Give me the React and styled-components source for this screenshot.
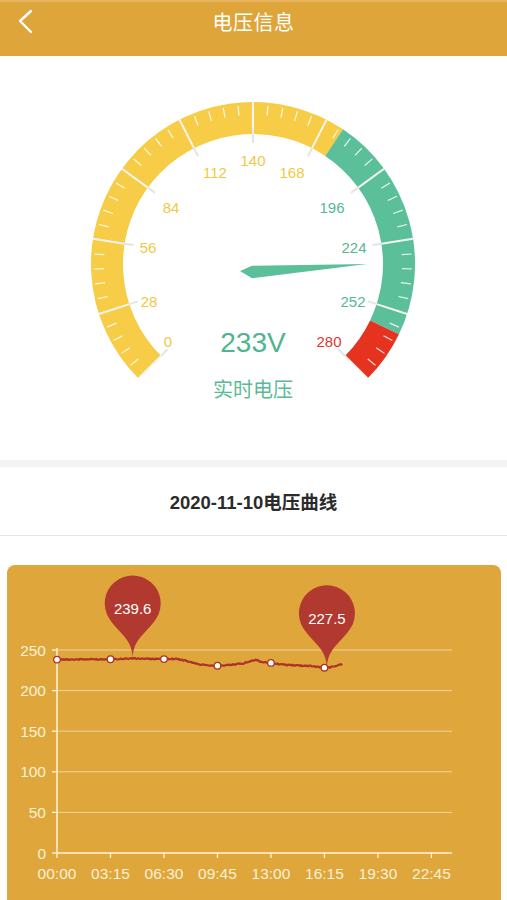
import React from "react";
import styled, { createGlobalStyle } from "styled-components";

// Gauge geometry (coordinates inside the gauge panel)
const CX = 253;
const CY = 208;
const R = 162;
const BAND = 32;
const MAX = 280;

const YELLOW = "#F7CC47";
const GREEN = "#5BBF9A";
const RED = "#E5331F";

const angle = (v) => ((225 - (v / MAX) * 270) * Math.PI) / 180;
const pt = (v, r) => [CX + r * Math.cos(angle(v)), CY - r * Math.sin(angle(v))];

const arcPath = (a, b, r) => {
  const [x1, y1] = pt(a, r);
  const [x2, y2] = pt(b, r);
  const large = ((b - a) / MAX) * 270 > 180 ? 1 : 0;
  return `M${x1} ${y1} A${r} ${r} 0 ${large} 1 ${x2} ${y2}`;
};

const bands = [
  { from: 0, to: 175, color: YELLOW },
  { from: 175, to: 260, color: GREEN },
  { from: 260, to: 280, color: RED },
];

const labels = [
  { v: 0, x: 168, y: 285, color: "#F3C744" },
  { v: 28, x: 149, y: 245, color: "#F3C744" },
  { v: 56, x: 148, y: 191, color: "#F3C744" },
  { v: 84, x: 171, y: 151, color: "#F3C744" },
  { v: 112, x: 215, y: 116, color: "#F3C744" },
  { v: 140, x: 253, y: 104, color: "#F3C744" },
  { v: 168, x: 292, y: 116, color: "#F3C744" },
  { v: 196, x: 332, y: 151, color: "#55B993" },
  { v: 224, x: 354, y: 191, color: "#55B993" },
  { v: 252, x: 353, y: 245, color: "#55B993" },
  { v: 280, x: 329, y: 285, color: "#E0392B" },
];

// Chart geometry (coordinates inside the card)
const X0 = 50;
const X1 = 445;
const Y0 = 288;
const YTOP = 85;
const xh = (h) => X0 + (h / 24) * (X1 - X0);
const yv = (v) => Y0 - (v / 250) * (Y0 - YTOP);

const keyframes = [
  [0, 238.2], [1.5, 238.5], [3.25, 238.6], [4.6, 239.6], [5.5, 239.1],
  [6.5, 238.8], [7.2, 239.2], [7.8, 237], [8.4, 233.2], [9, 231.6],
  [9.75, 230.6], [10.5, 231.4], [11.3, 233.4], [11.8, 236.8], [12.1, 238],
  [12.4, 235.2], [13, 234.1], [13.6, 232.2], [14.5, 231.2], [15.5, 230.2],
  [16.4, 227.8], [16.8, 229.6], [17.38, 233],
];

const interp = (h) => {
  for (let i = 0; i < keyframes.length - 1; i++) {
    const [h1, v1] = keyframes[i];
    const [h2, v2] = keyframes[i + 1];
    if (h >= h1 && h <= h2) return v1 + ((h - h1) / (h2 - h1)) * (v2 - v1);
  }
  return keyframes[keyframes.length - 1][1];
};

const rand = (i) => {
  const s = Math.sin(i * 78.233 + 12.9898) * 43758.5453;
  return s - Math.floor(s);
};

const series = [];
for (let i = 0; i * 4 <= 17.38 * 60; i++) {
  const h = (i * 4) / 60;
  series.push([h, interp(h) + (rand(i) - 0.5) * 1.3]);
}
const linePath = series
  .map(([h, v], i) => `${i ? "L" : "M"}${xh(h).toFixed(1)} ${yv(v).toFixed(1)}`)
  .join(" ");

const dotHours = [0, 3.25, 6.5, 9.75, 13, 16.25];
const xLabels = ["00:00", "03:15", "06:30", "09:45", "13:00", "16:15", "19:30", "22:45"];
const yLevels = [0, 50, 100, 150, 200, 250];

// echarts-like map pin, tip at (x, y)
const pinPath = (x, y) => {
  const r = 28;
  const cy = y - 55;
  const a = (32 * Math.PI) / 180;
  const lx = x - r * Math.cos(a);
  const rx = x + r * Math.cos(a);
  const py = cy + r * Math.sin(a);
  const cp = r * 0.6;
  const cp2 = r * 0.7;
  return `M${lx} ${py} A${r} ${r} 0 1 1 ${rx} ${py} C${rx - Math.sin(a) * cp} ${py + Math.cos(a) * cp} ${x} ${y - cp2} ${x} ${y} C${x} ${y - cp2} ${lx + Math.sin(a) * cp} ${py + Math.cos(a) * cp} ${lx} ${py} Z`;
};

const pins = [
  { h: 4.6, v: 239.6, text: "239.6" },
  { h: 16.4, v: 227.5, text: "227.5" },
];

const Gauge = () => (
  <GaugeSvg width="507" height="404" viewBox="0 0 507 404">
    {bands.map((b) => (
      <path
        key={b.from}
        d={arcPath(b.from, b.to, R - BAND / 2)}
        stroke={b.color}
        strokeWidth={BAND}
        fill="none"
      />
    ))}
    {Array.from({ length: 51 }, (_, i) => i)
      .filter((i) => i % 5 !== 0)
      .map((i) => {
        const v = i * 5.6;
        const [x1, y1] = pt(v, R - 3);
        const [x2, y2] = pt(v, R - 13);
        return (
          <line key={i} x1={x1} y1={y1} x2={x2} y2={y2} stroke="#fff" strokeOpacity="0.85" strokeWidth="1.2" />
        );
      })}
    {Array.from({ length: 11 }, (_, i) => i * 28).map((v) => {
      const [x1, y1] = pt(v, R);
      const [x2, y2] = pt(v, R - BAND);
      const [x3, y3] = pt(v, R - BAND - 9);
      return (
        <g key={v}>
          <line x1={x1} y1={y1} x2={x2} y2={y2} stroke="#f4f4f4" strokeWidth="2" />
          <line x1={x2} y1={y2} x2={x3} y2={y3} stroke="#e4e4e4" strokeWidth="2" />
        </g>
      );
    })}
    {labels.map((l) => (
      <GaugeLabel key={l.v} x={l.x} y={l.y} fill={l.color}>
        {l.v}
      </GaugeLabel>
    ))}
    <polygon points="240,215 252,209.7 367,208 252,222.3" fill={GREEN} />
    <ValueText x={253} y={286}>233V</ValueText>
    <CaptionText x={253} y={332}>实时电压</CaptionText>
  </GaugeSvg>
);

const Chart = () => (
  <ChartSvg width="494" height="345" viewBox="0 0 494 345">
    {yLevels.map((lv) => (
      <g key={lv}>
        {lv > 0 && (
          <line x1={X0} y1={yv(lv)} x2={X1} y2={yv(lv)} stroke="#fff" strokeOpacity="0.5" strokeWidth="1" />
        )}
        <line x1={X0 - 5} y1={yv(lv)} x2={X0} y2={yv(lv)} stroke="#FFF3D8" strokeWidth="1.3" />
        <AxisText x={39} y={yv(lv)} textAnchor="end">
          {lv}
        </AxisText>
      </g>
    ))}
    <line x1={X0} y1={YTOP - 2} x2={X0} y2={Y0} stroke="#FFF3D8" strokeWidth="1.5" />
    <line x1={X0} y1={Y0} x2={X1} y2={Y0} stroke="#FFF3D8" strokeWidth="1.5" />
    {xLabels.map((t, i) => {
      const x = xh(i * 3.25);
      return (
        <g key={t}>
          <line x1={x} y1={Y0} x2={x} y2={Y0 + 5} stroke="#FFF3D8" strokeWidth="1.3" />
          <AxisText x={x} y={308} textAnchor="middle">
            {t}
          </AxisText>
        </g>
      );
    })}
    <path d={linePath} stroke="#AE3328" strokeWidth="2.2" fill="none" strokeLinejoin="round" />
    {dotHours.map((h) => (
      <circle key={h} cx={xh(h)} cy={yv(interp(h))} r="3.3" fill="#fff" stroke="#AE3328" strokeWidth="1.3" />
    ))}
    {pins.map((p) => {
      const x = xh(p.h);
      const y = yv(p.v);
      return (
        <g key={p.text}>
          <path d={pinPath(x, y)} fill="#B2392F" />
          <PinText x={x} y={y - 50}>
            {p.text}
          </PinText>
        </g>
      );
    })}
  </ChartSvg>
);

const App = () => (
  <Page>
    <GlobalStyle />
    <Header>
      <BackIcon width="16" height="26" viewBox="0 0 16 26">
        <polyline points="13,3 2,13 13,24" fill="none" stroke="#fff" strokeWidth="2.4" strokeLinecap="round" strokeLinejoin="round" />
      </BackIcon>
      <Title>电压信息</Title>
    </Header>
    <GaugePanel>
      <Gauge />
    </GaugePanel>
    <Divider />
    <SectionTitle>2020-11-10电压曲线</SectionTitle>
    <ChartCard>
      <Chart />
    </ChartCard>
  </Page>
);

export default App;

const GlobalStyle = createGlobalStyle`
  html, body {
    margin: 0;
    padding: 0;
    background: #fff;
  }
  body {
    font-family: "Liberation Sans", "Noto Sans CJK SC", sans-serif;
  }
`;

const Page = styled.div`
  width: 507px;
  background: #fff;
  overflow: hidden;
`;

const Header = styled.div`
  position: relative;
  height: 48px;
  background: #DEA53A;
  border-top: 2px solid #E6B25E;
  display: flex;
  justify-content: center;
  padding-top: 6px;
`;

const BackIcon = styled.svg`
  position: absolute;
  left: 18px;
  top: 6px;
`;

const Title = styled.div`
  color: #fff;
  font-size: 20px;
  line-height: 28px;
  letter-spacing: 0.5px;
  font-family: "Noto Sans CJK SC", sans-serif;
`;

const GaugePanel = styled.div`
  height: 404px;
  background: #fff;
`;

const GaugeSvg = styled.svg`
  display: block;
`;

const GaugeLabel = styled.text`
  font-family: "Liberation Sans", sans-serif;
  font-size: 15px;
  text-anchor: middle;
  dominant-baseline: central;
`;

const ValueText = styled.text`
  font-family: "Liberation Sans", sans-serif;
  font-size: 28px;
  fill: #4DB68D;
  text-anchor: middle;
  dominant-baseline: central;
`;

const CaptionText = styled.text`
  font-family: "Noto Sans CJK SC", sans-serif;
  font-size: 20px;
  fill: #5BBA96;
  text-anchor: middle;
  dominant-baseline: central;
`;

const Divider = styled.div`
  height: 7px;
  background: #F3F3F5;
`;

const SectionTitle = styled.div`
  height: 68px;
  display: flex;
  align-items: center;
  justify-content: center;
  border-bottom: 1px solid #E6E6E6;
  font-size: 18.5px;
  font-weight: bold;
  color: #2b2b2b;
  font-family: "Liberation Sans", "Noto Sans CJK SC", sans-serif;
  margin-bottom: 29px;
`;

const ChartCard = styled.div`
  margin: 0 6px 20px 7px;
  height: 345px;
  background: #DFA63B;
  border-radius: 8px;
`;

const ChartSvg = styled.svg`
  display: block;
`;

const AxisText = styled.text`
  font-family: "Liberation Sans", sans-serif;
  font-size: 15.5px;
  fill: #FCF0D6;
  dominant-baseline: central;
`;

const PinText = styled.text`
  font-family: "Liberation Sans", sans-serif;
  font-size: 15px;
  fill: #fff;
  text-anchor: middle;
  dominant-baseline: central;
`;
